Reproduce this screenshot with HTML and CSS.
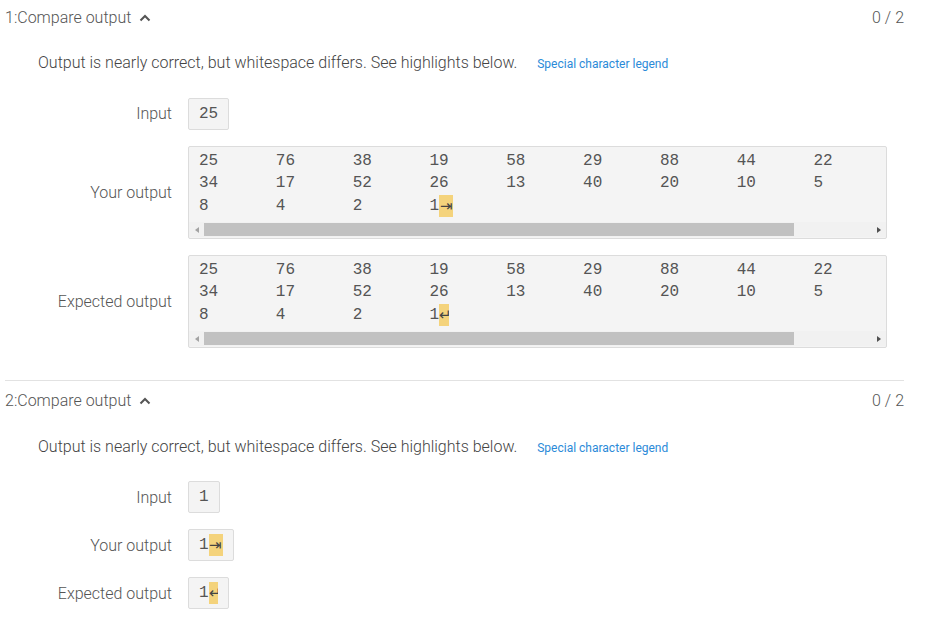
FILE: index.html
```html
<!DOCTYPE html>
<html>
<head lang="en">
    <meta charset="utf-8">
    <title>Compare output</title>
    <link rel="stylesheet" href="styles.css">
</head>
<body>
<div class="results">
    <div class="test">
        <div class="test-header">
            <span class="test-name">1:Compare output
                <svg class="caret" width="12" height="8" viewBox="0 0 12 8"><polyline points="1.5,6.5 6,2 10.5,6.5" fill="none" stroke="#555" stroke-width="2"/></svg>
            </span>
            <span class="score">0 / 2</span>
        </div>
        <div class="message">
            Output is nearly correct, but whitespace differs. See highlights below.
            <a class="legend" href="#">Special character legend</a>
        </div>
        <div class="rows">
            <div class="label">Input</div>
            <pre class="box">25</pre>

            <div class="label">Your output</div>
            <div class="box scroll">
                <pre class="code">25&#9;76&#9;38&#9;19&#9;58&#9;29&#9;88&#9;44&#9;22&#9;&#9;
34&#9;17&#9;52&#9;26&#9;13&#9;40&#9;20&#9;10&#9;5
8&#9;4&#9;2&#9;1<span class="mark tab">⇥</span></pre>
                <div class="hscroll">
                    <span class="arrow left"></span>
                    <span class="track"><span class="thumb"></span></span>
                    <span class="arrow right"></span>
                </div>
            </div>

            <div class="label">Expected output</div>
            <div class="box scroll">
                <pre class="code">25&#9;76&#9;38&#9;19&#9;58&#9;29&#9;88&#9;44&#9;22&#9;&#9;
34&#9;17&#9;52&#9;26&#9;13&#9;40&#9;20&#9;10&#9;5
8&#9;4&#9;2&#9;1<span class="mark nl">↵</span></pre>
                <div class="hscroll">
                    <span class="arrow left"></span>
                    <span class="track"><span class="thumb"></span></span>
                    <span class="arrow right"></span>
                </div>
            </div>
        </div>
    </div>

    <div class="test">
        <div class="test-header">
            <span class="test-name">2:Compare output
                <svg class="caret" width="12" height="8" viewBox="0 0 12 8"><polyline points="1.5,6.5 6,2 10.5,6.5" fill="none" stroke="#555" stroke-width="2"/></svg>
            </span>
            <span class="score">0 / 2</span>
        </div>
        <div class="message">
            Output is nearly correct, but whitespace differs. See highlights below.
            <a class="legend" href="#">Special character legend</a>
        </div>
        <div class="rows">
            <div class="label">Input</div>
            <pre class="box">1</pre>

            <div class="label">Your output</div>
            <pre class="box">1<span class="mark tab">⇥</span></pre>

            <div class="label">Expected output</div>
            <pre class="box">1<span class="mark nl">↵</span></pre>
        </div>
    </div>
</div>
</body>
</html>
```

FILE: styles.css
```css
body {
    margin: 0;
    font-family: Roboto, "Noto Sans", sans-serif;
    font-weight: 300;
    color: #333;
    background: #fff;
}

.results {
    margin: 0 23px 0 5px;
}

.test {
    padding-bottom: 32px;
}

.test + .test {
    border-top: 1px solid #e2e2e2;
    padding-top: 3px;
}

.test-header {
    display: flex;
    justify-content: space-between;
    align-items: center;
    height: 34px;
    font-size: 16px;
    color: #555;
}

.caret {
    margin-left: 4px;
    vertical-align: 1px;
}

.message {
    margin-top: 18px;
    padding-left: 33px;
    font-size: 16px;
    line-height: 22px;
    color: #444;
}

.legend {
    margin-left: 16px;
    font-size: 12px;
    font-weight: 400;
    color: #2b8ad8;
    text-decoration: none;
}

.rows {
    display: grid;
    grid-template-columns: 134px 1fr;
    column-gap: 16px;
    row-gap: 16px;
    align-items: center;
    justify-items: start;
    margin-top: 22.5px;
    padding-left: 33px;
}

.label {
    justify-self: end;
    font-size: 16px;
    color: #555;
}

.box {
    margin: 0;
    box-sizing: border-box;
    height: 32px;
    padding: 4px 10px;
    background: #f4f4f4;
    border: 1px solid #dcdcdc;
    border-radius: 2px;
    font-family: "Liberation Mono", "Courier New", monospace;
    font-size: 16px;
    line-height: 22px;
    color: #555;
    tab-size: 8;
}

.box.scroll {
    width: 699px;
    height: 93px;
    padding: 0;
}

.code {
    margin: 0;
    padding: 3px 10px 5px;
    overflow: hidden;
    font: inherit;
    line-height: 22.5px;
    tab-size: 8;
}

.hscroll {
    display: flex;
    height: 15px;
    background: #f1f1f1;
}

.arrow {
    width: 15px;
    display: flex;
    align-items: center;
    justify-content: center;
}

.arrow::before {
    content: "";
    border-top: 3.5px solid transparent;
    border-bottom: 3.5px solid transparent;
}

.arrow.left::before {
    border-right: 4px solid #a3a3a3;
}

.arrow.right::before {
    border-left: 4px solid #505050;
}

.track {
    flex: 1;
    padding: 1px 0;
}

.thumb {
    display: block;
    width: 88.4%;
    height: 100%;
    background: #c1c1c1;
}

.mark {
    display: inline-block;
    vertical-align: top;
    height: 22px;
    line-height: 22px;
    background: #f4d37c;
    text-align: center;
    font-family: "DejaVu Sans", sans-serif;
    font-size: 15px;
    color: #444;
    overflow: hidden;
}

.mark.tab {
    width: 14px;
}

.mark.nl {
    width: 9.6px;
}
```
